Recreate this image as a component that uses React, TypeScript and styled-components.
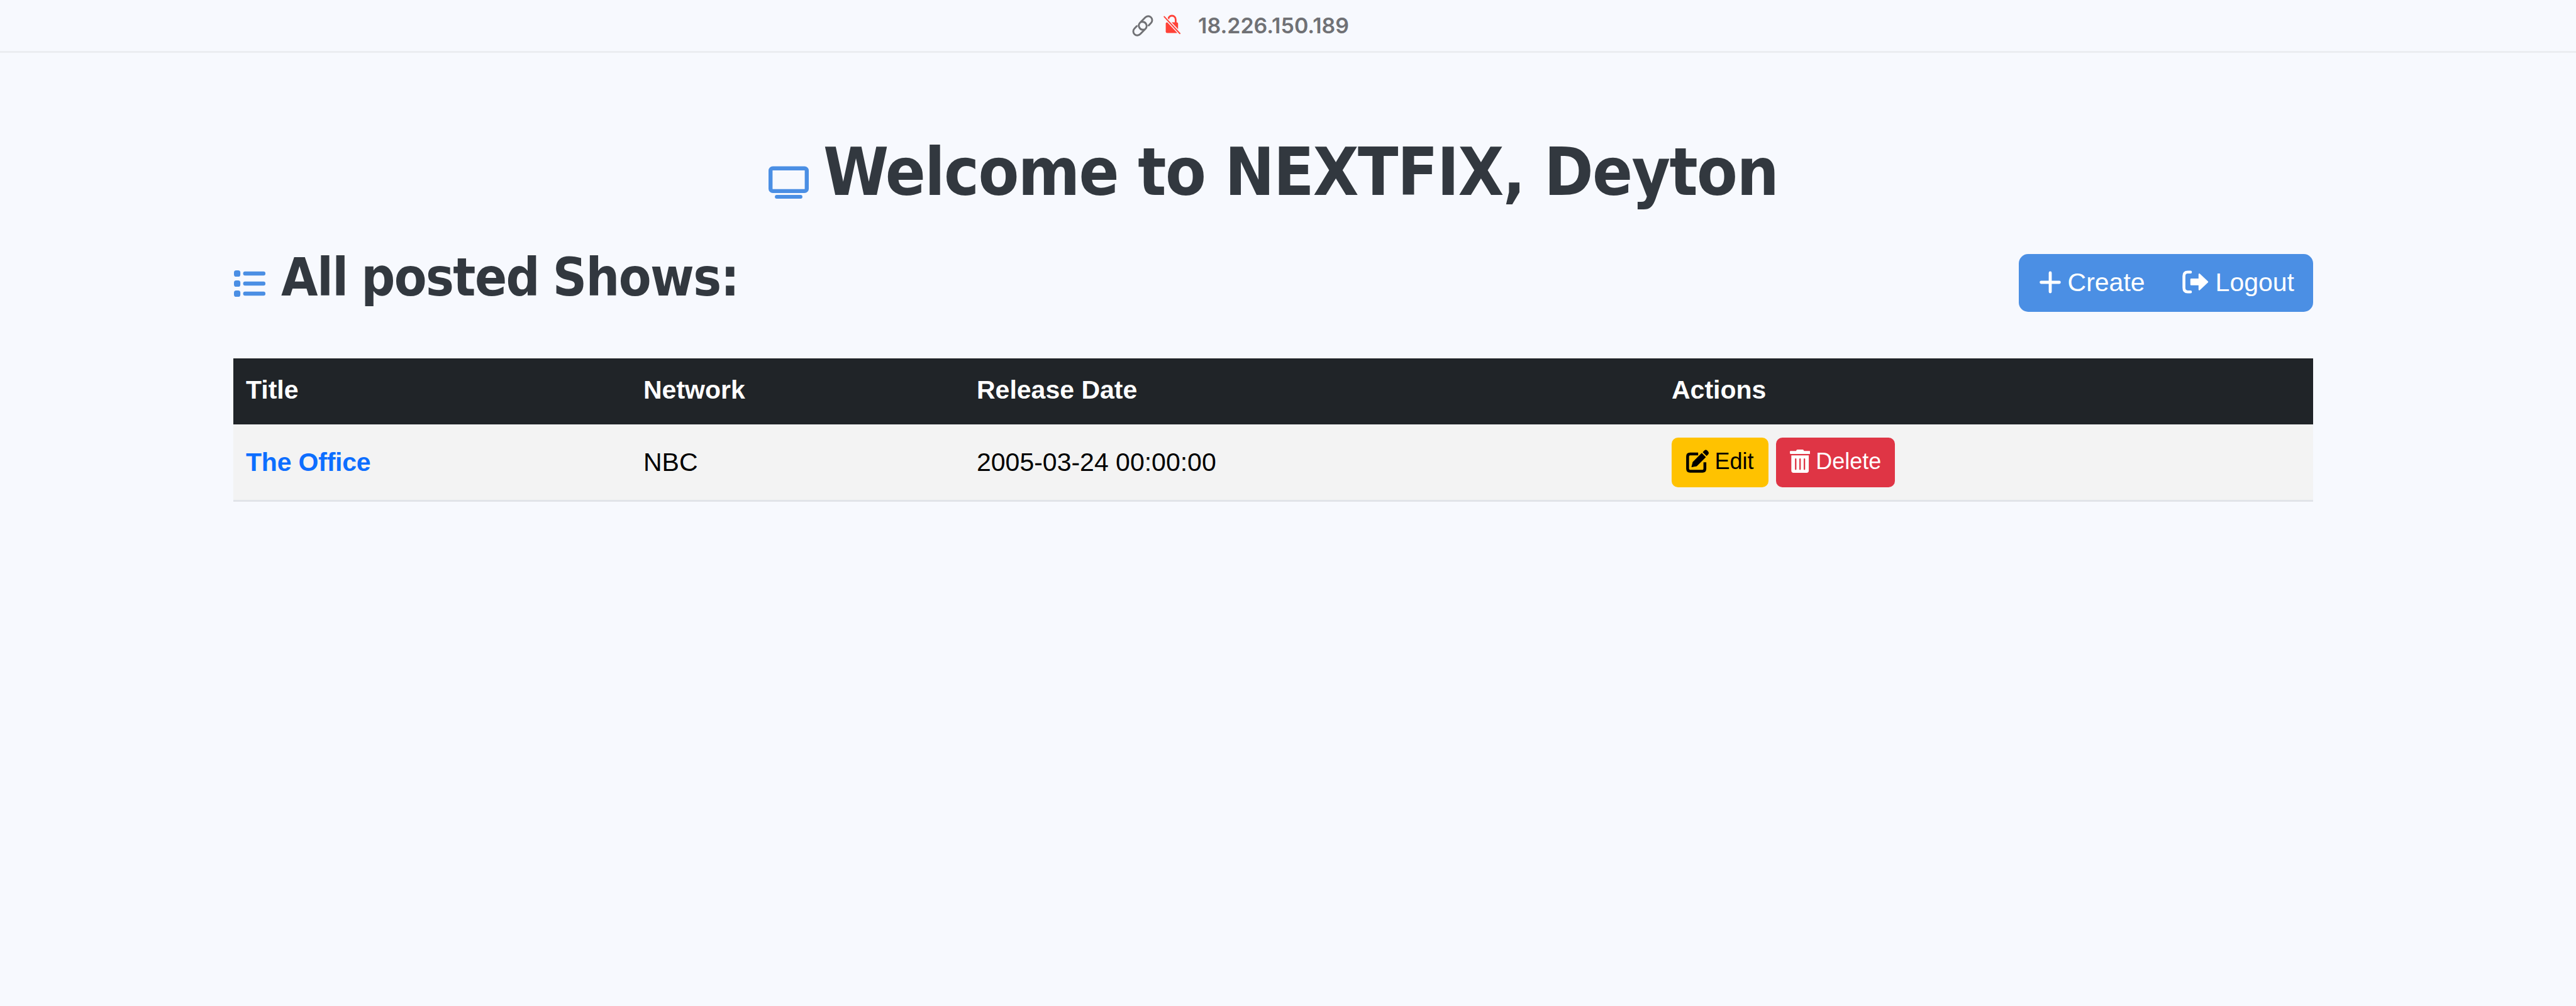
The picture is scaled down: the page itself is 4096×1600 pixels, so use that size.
import React from 'react';
import styled, { createGlobalStyle } from 'styled-components';
import { FaTrashAlt } from 'react-icons/fa';

const ACCENT = '#4b8fe4';
const PAGE = '#f7f9fe';
const INK = '#32383f';

const GlobalStyle = createGlobalStyle`
  *, *::before, *::after { box-sizing: border-box; }
  body {
    margin: 0;
    background: ${PAGE};
    color: #000;
    font-family: 'Liberation Sans', Arial, sans-serif;
    font-size: 41px;
  }
  svg { display: block; flex: none; }
`;

const Page = styled.div`
  width: 4096px;
  height: 1600px;
  overflow: hidden;
  background: ${PAGE};
`;

const AddressBar = styled.header`
  display: flex;
  align-items: center;
  height: 84px;
  padding-left: 1799px;
  border-bottom: 3px solid #ebedf1;
`;

const LockSlot = styled.span`
  margin-left: 15px;
  padding-bottom: 3px;
`;

const Address = styled.span`
  margin-left: 27px;
  color: #707175;
  font: 600 34px/40px Inter, sans-serif;
`;

const Main = styled.main`
  width: 3307px;
  margin-left: 371px;
  padding-top: 126px;
`;

const Title = styled.h1`
  display: flex;
  justify-content: center;
  gap: 23px;
  margin: 0 0 53px;
  color: ${INK};
  font: 700 105px/128px 'DejaVu Sans Condensed', Tahoma, sans-serif;
  letter-spacing: -1.6px;

  svg { margin-top: 54px; }
`;

const Toolbar = styled.div`
  display: flex;
  justify-content: space-between;
  height: 105px;
  margin-bottom: 74px;
`;

const Subtitle = styled.h2`
  display: flex;
  gap: 25px;
  margin: 0;
  color: ${INK};
  font: 700 84px/100px 'DejaVu Sans Condensed', Tahoma, sans-serif;
  letter-spacing: -1.6px;
  word-spacing: -3px;

  svg { margin: 38px 0 0 1px; }
`;

const ButtonGroup = styled.nav`
  display: flex;
  align-self: flex-end;
  height: 92px;
  overflow: hidden;
  border-radius: 15px;
  background: ${ACCENT};
`;

const NavButton = styled.a<{ $start: number; $end: number }>`
  display: flex;
  align-items: center;
  gap: 11px;
  padding: 0 ${p => p.$end}px 3px ${p => p.$start}px;
  color: #fff;
  line-height: 48px;

  span { padding-top: 1px; }
`;

const Table = styled.table`
  width: 100%;
  table-layout: fixed;
  border-collapse: separate;
  border-spacing: 0;
  text-align: left;
`;

const Col = styled.col<{ $w: number }>`
  width: ${p => p.$w}px;
`;

const HeadCell = styled.th`
  height: 105px;
  padding: 0 20px 5px;
  background: #202428;
  color: #fff;
  font-weight: 700;
  line-height: 48px;
`;

const Cell = styled.td`
  height: 123px;
  padding: 0 20px;
  border-bottom: 3px solid #e1e4e9;
  background: #f3f3f3;
  line-height: 48px;
`;

const ShowLink = styled.a`
  color: #0d6eff;
  font-weight: 700;
  letter-spacing: -0.2px;
`;

const Actions = styled.div`
  display: flex;
  gap: 12px;
`;

const ActionButton = styled.button<{ $bg: string; $fg: string; $w: number }>`
  display: flex;
  align-items: center;
  justify-content: center;
  gap: 9px;
  width: ${p => p.$w}px;
  height: 79px;
  padding: 0 0 3px;
  border: 0;
  border-radius: 10px;
  background: ${p => p.$bg};
  color: ${p => p.$fg};
  font: 400 36px/42px 'Liberation Sans', Arial, sans-serif;

  span { padding-top: 1px; }
`;

const LinkIcon = () => (
  <svg width="36" height="36" viewBox="-18 -18 36 36" fill="none" stroke="#707175" strokeWidth="2.9" strokeLinecap="round">
    <g transform="rotate(-46)">
      <path d="M-7 -6.4H-12.4A6.4 6.4 0 0 0 -12.4 6.4H-.3A6.4 6.4 0 0 0 3.4 -5.2" />
      <path d="M7 6.4H12.4A6.4 6.4 0 0 0 12.4 -6.4H.3A6.4 6.4 0 0 0 -3.4 5.2" />
    </g>
  </svg>
);

const InsecureIcon = () => (
  <svg width="28" height="32" viewBox="0 0 28 32" fill="none">
    <path d="M7.6 14V8.2a5.9 6.2 0 0 1 11.8 0V14" stroke="#ff4238" strokeWidth="2.8" />
    <rect x="3.6" y="12.4" width="19.6" height="17" rx="2.2" fill="#ff4238" />
    <path d="M1.5 4L26 30" stroke={PAGE} strokeWidth="5" />
    <path d="M1.3 3.6L26 30.2" stroke="#ff4238" strokeWidth="2" strokeLinecap="round" />
  </svg>
);

const TvIcon = () => (
  <svg width="64" height="52" viewBox="0 0 64 52" fill="none" stroke={ACCENT}>
    <rect x="3.2" y="3.7" width="57.6" height="36.2" rx="3.6" strokeWidth="6.4" />
    <path d="M13 49H51" strokeWidth="5.8" strokeLinecap="round" />
  </svg>
);

const ListIcon = () => (
  <svg width="50" height="44" viewBox="0 0 50 44" fill={ACCENT}>
    {[6, 22, 38].map(y => (
      <g key={y}>
        <rect x="0" y={y - 5} width="10.2" height="10" rx="3.6" />
        <rect x="14.6" y={y - 3.3} width="35.4" height="6.6" rx="3" />
      </g>
    ))}
  </svg>
);

const PlusIcon = () => (
  <svg width="34" height="36" viewBox="0 0 34 36" stroke="#fff" strokeWidth="4.8" strokeLinecap="round">
    <path d="M17 3V33M2.6 18H31.4" />
  </svg>
);

const LogoutIcon = () => (
  <svg width="42" height="37" viewBox="0 0 42 37" fill="none">
    <path d="M13 2.7H8.6Q2.6 2.7 2.6 9V27.8Q2.6 34.2 8.6 34.2H13" stroke="#fff" strokeWidth="4.6" strokeLinecap="round" />
    <path d="M14 14.3H27V6.2L40 18.4L27 30.6V22.6H14Z" fill="#fff" stroke="#fff" strokeWidth="2.4" strokeLinejoin="round" />
  </svg>
);

const EditIcon = () => (
  <svg width="36" height="37" viewBox="0 0 135 138">
    <path d="M72 26H24Q9 26 9 41V114Q9 129 24 129H98Q112 129 112 114V76" fill="none" stroke="#000" strokeWidth="17" />
    <path d="M34 103L41 75L93 23L115 45L63 97Z" fill="#000" stroke="#000" strokeWidth="4" strokeLinejoin="round" />
    <path d="M99 16L106 8C113 0 120 -1 128 7C137 16 137 24 130 31L122 38Z" fill="#000" />
  </svg>
);

const TrashIcon = styled(FaTrashAlt)`
  width: 32.4px;
  height: 37px;
`;

export default function App() {
  return (
    <Page>
      <GlobalStyle />
      <AddressBar>
        <LinkIcon />
        <LockSlot><InsecureIcon /></LockSlot>
        <Address>18.226.150.189</Address>
      </AddressBar>
      <Main>
        <Title>
          <TvIcon />
          <span>Welcome to NEXTFIX, Deyton</span>
        </Title>
        <Toolbar>
          <Subtitle>
            <ListIcon />
            <span>All posted Shows:</span>
          </Subtitle>
          <ButtonGroup>
            <NavButton $start={33} $end={30}><PlusIcon /><span>Create</span></NavButton>
            <NavButton $start={29} $end={30}><LogoutIcon /><span>Logout</span></NavButton>
          </ButtonGroup>
        </Toolbar>
        <Table>
          <colgroup>
            <Col $w={632} />
            <Col $w={530} />
            <Col $w={1105} />
            <Col $w={1040} />
          </colgroup>
          <thead>
            <tr>
              <HeadCell>Title</HeadCell>
              <HeadCell>Network</HeadCell>
              <HeadCell>Release Date</HeadCell>
              <HeadCell>Actions</HeadCell>
            </tr>
          </thead>
          <tbody>
            <tr>
              <Cell><ShowLink>The Office</ShowLink></Cell>
              <Cell>NBC</Cell>
              <Cell>2005-03-24 00:00:00</Cell>
              <Cell>
                <Actions>
                  <ActionButton $bg="#ffc200" $fg="#000" $w={154}><EditIcon /><span>Edit</span></ActionButton>
                  <ActionButton $bg="#df3545" $fg="#fff" $w={189}><TrashIcon /><span>Delete</span></ActionButton>
                </Actions>
              </Cell>
            </tr>
          </tbody>
        </Table>
      </Main>
    </Page>
  );
}
